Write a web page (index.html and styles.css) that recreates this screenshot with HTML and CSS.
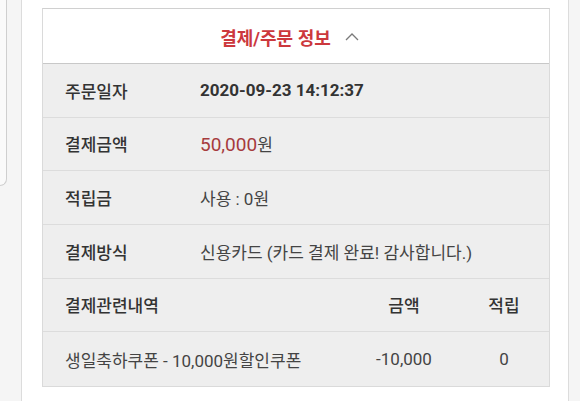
FILE: index.html
```html
<!DOCTYPE html>
<html lang="ko">
<head>
  <meta charset="UTF-8">
  <meta name="viewport" content="width=device-width, initial-scale=1.0"/>
  <title>결제/주문 정보</title>
  <link rel="stylesheet" href="styles.css">
</head>
<body>
  <div class="side-left">
    <div class="side-card"></div>
  </div>
  <div class="main">
    <div class="order">
      <div class="order-head">
        <span class="order-title">결제/주문 정보</span>
        <svg class="chevron" width="14" height="8" viewBox="0 0 14 8">
          <polyline points="1,7 7,1 13,7" fill="none" stroke="#7a7a7a" stroke-width="1.3"/>
        </svg>
      </div>
      <div class="row">
        <span class="label">주문일자</span>
        <span class="value bold">2020-09-23 14:12:37</span>
      </div>
      <div class="row">
        <span class="label">결제금액</span>
        <span class="value"><span class="price">50,000</span>원</span>
      </div>
      <div class="row">
        <span class="label">적립금</span>
        <span class="value">사용 : 0원</span>
      </div>
      <div class="row">
        <span class="label">결제방식</span>
        <span class="value">신용카드 (카드 결제 완료! 감사합니다.)</span>
      </div>
      <div class="row row3">
        <span class="label">결제관련내역</span>
        <span class="label center">금액</span>
        <span class="label center">적립</span>
      </div>
      <div class="row row3">
        <span class="value">생일축하쿠폰 - 10,000원할인쿠폰</span>
        <span class="value center">-10,000</span>
        <span class="value center">0</span>
      </div>
    </div>
  </div>
  <div class="side-right"></div>
</body>
</html>
```

FILE: styles.css
```css
body{
  margin: 0;
  display: flex;
  height: 401px;
  overflow: hidden;
  background: #fff;
  font-family: Roboto, "Noto Sans CJK KR", sans-serif;
}
.side-left{
  width: 21px;
  background: #f5f5f5;
  border-right: 1px solid #dcdcdc;
}
.side-card{
  width: 6px;
  height: 185px;
  background: #fafafa;
  border-right: 1px solid #cfcfcf;
  border-bottom: 1px solid #cfcfcf;
  border-bottom-right-radius: 7px;
}
.main{
  flex: 1;
  padding: 8px 18px 0 20px;
}
.side-right{
  width: 11px;
  background: #f5f5f5;
  border-left: 1px solid #dcdcdc;
}
.order{
  border: 1px solid #dadada;
  border-top-color: #d0d0d0;
  background: #eeeeee;
}
.order-head{
  height: 55px;
  background: #fff;
  border-bottom: 1px solid #c8c8c8;
  display: flex;
  align-items: center;
  justify-content: center;
  gap: 14px;
  padding: 1px 13px 0 0;
  box-sizing: border-box;
}
.order-title{
  color: #cc383d;
  font-size: 18px;
  font-weight: bold;
}
.chevron{
  margin-top: 1px;
}
.row{
  height: 53.67px;
  box-sizing: border-box;
  border-bottom: 1px solid #dcdcdc;
  display: grid;
  grid-template-columns: 135px 1fr;
  align-items: center;
  padding-left: 22px;
  font-size: 17px;
}
.row:last-child{
  border-bottom: none;
}
.row3{
  grid-template-columns: 1fr 110px 90px;
}
.label{
  color: #333;
  font-weight: 500;
}
.value{
  color: #444;
}
.bold{
  font-weight: bold;
  color: #333;
}
.price{
  color: #a63b3d;
  font-size: 19px;
}
.center{
  text-align: center;
}
```
